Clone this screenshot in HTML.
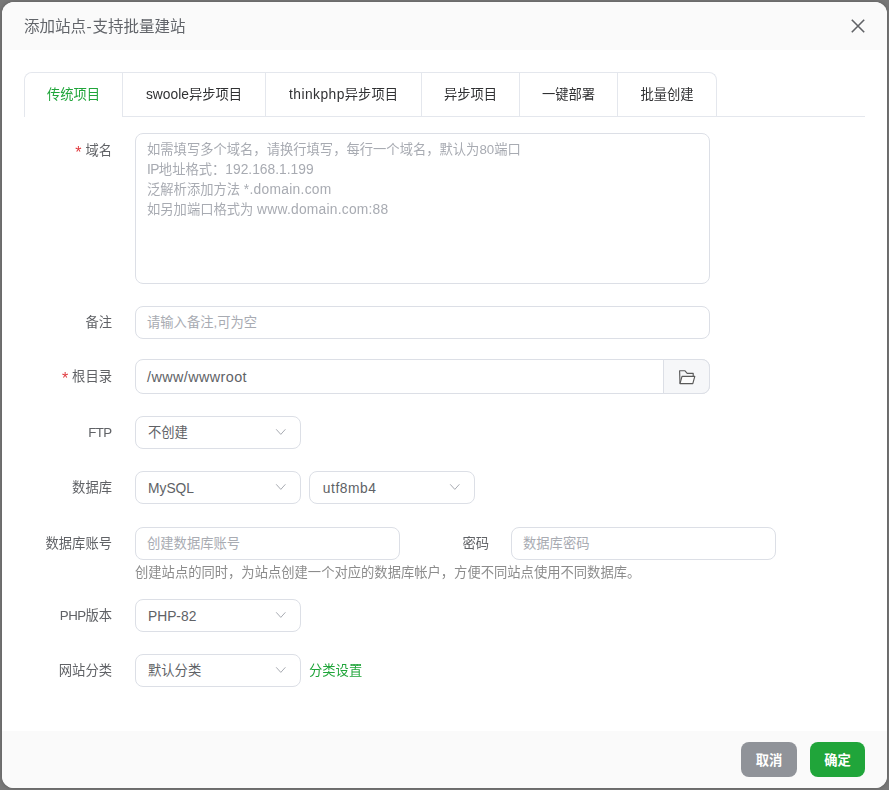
<!DOCTYPE html>
<html lang="zh-CN">
<head>
<meta charset="utf-8">
<title>添加站点-支持批量建站</title>
<style>
*{box-sizing:border-box;margin:0;padding:0}
html,body{width:889px;height:790px;overflow:hidden}
body{background:#787878;text-spacing-trim:space-all;font-family:"Liberation Sans","Noto Sans CJK SC",sans-serif;font-size:13.3px;color:#606266;position:relative}
.dlg{position:absolute;left:2px;top:2px;width:885px;height:786px;border-radius:12px;background:#fff;overflow:hidden;box-shadow:0 0 4px rgba(0,0,0,.25)}
.hd{position:absolute;left:0;top:0;width:100%;height:48px;background:#fafafa}
.hd .t{position:absolute;left:22px;top:0;line-height:49px;font-size:15.5px;color:#62656a;white-space:nowrap}
.hd svg{position:absolute;left:848.8px;top:17px}
.ft{position:absolute;left:0;top:729px;width:100%;height:57px;background:#fafafa}
.btn{position:absolute;top:11px;height:35px;border-radius:8px;color:#fff;font-size:13.3px;font-weight:bold;line-height:37px;text-align:center}
.b1{left:739px;width:56px;background:#909399}
.b2{left:808px;width:55px;background:#20a53a}
.tabs{position:absolute;left:22px;top:70px;height:45px;width:841px;border-bottom:1px solid #e4e7ed}
.nav{position:absolute;left:0;top:0;height:45px;border:1px solid #e4e7ed;border-bottom:none;border-radius:8px 8px 0 0;display:flex}
.tab{height:44px;line-height:44px;text-align:center;font-size:13.3px;color:#303133;border-left:1px solid #e4e7ed;white-space:nowrap}
.tab:first-child{border-left:none}
.tab.on{color:#20a53a;background:#fff;height:45px;position:relative;z-index:2;border-radius:8px 0 0 0}
.lb{position:absolute;left:0;width:110px;text-align:right;height:33px;line-height:34px;font-size:13.3px;color:#606266;white-space:nowrap}
.lb i{font-style:normal;color:#e03a3e;margin-right:4px;font-size:16px;line-height:10px;display:inline-block;vertical-align:-3px}
.ip{position:absolute;height:33px;border:1px solid #dcdfe6;border-radius:8px;background:#fff;line-height:31px;padding-left:11px;font-size:13.3px;color:#606266;white-space:nowrap}
.ph{color:#a8abb2}
.g{will-change:transform}
.sel{padding-left:12px}
.sel svg{position:absolute;left:139px;top:11px}
.la{font-size:13.8px}.lo{position:relative;top:1px}
</style>
</head>
<body>
<div class="dlg">
  <div class="hd">
    <div class="t g">添加站点<span style="margin:0 .6px">-</span>支持批量建站</div>
    <svg width="14" height="14" viewBox="0 0 14 14"><path d="M0.8 0.8L13.2 13.2M13.2 0.8L0.8 13.2" stroke="#606266" stroke-width="1.6" fill="none"/></svg>
  </div>

  <div class="tabs">
    <div class="nav g">
      <div class="tab on" style="width:97px">传统项目</div>
      <div class="tab" style="width:143px"><span class="la">swoole</span>异步项目</div>
      <div class="tab" style="width:156px"><span class="la" style="letter-spacing:.46px">thinkphp</span>异步项目</div>
      <div class="tab" style="width:98px">异步项目</div>
      <div class="tab" style="width:98px">一键部署</div>
      <div class="tab" style="width:99px">批量创建</div>
    </div>
  </div>

  <div class="lb g" style="top:132px"><i>*</i>域名</div>
  <div class="ip ph g" style="left:133px;top:131px;width:575px;height:151px;line-height:20px;padding-top:6px;padding-left:11px">如需填写多个域名，请换行填写，每行一个域名，默认为80端口<br><span class="la" style="letter-spacing:-.6px">IP</span>地址格式：<span class="la">192.168.1.199</span><br>泛解析添加方法 <span class="la" style="letter-spacing:.29px">*.domain.com</span><br>如另加端口格式为 <span class="la" style="letter-spacing:.24px">www.domain.com:88</span></div>

  <div class="lb g" style="top:304px">备注</div>
  <div class="ip ph" style="left:133px;top:304px;width:575px">请输入备注,可为空</div>

  <div class="lb g" style="top:358px"><i>*</i>根目录</div>
  <div class="ip" style="left:133px;top:357px;width:575px;height:35px;line-height:35px;font-size:14.4px;letter-spacing:.4px">/www/wwwroot</div>
  <div style="position:absolute;left:661px;top:357px;width:47px;height:35px;border:1px solid #dcdfe6;border-radius:0 8px 8px 0;background:#f6f7f9">
    <svg style="position:absolute;left:15px;top:10px" width="17" height="15" viewBox="0 0 17 15"><path d="M1 13.6L0.6 0.7h5.2L8.2 3.3h6v3" fill="none" stroke="#5a5a5a" stroke-width="1.15" stroke-linejoin="round"/><path d="M1 13.6L3 6.4h12.8l-2 7.2z" fill="#fcfcfc" stroke="#5a5a5a" stroke-width="1.15" stroke-linejoin="round"/></svg>
  </div>

  <div class="lb g" style="top:414px"><span style="letter-spacing:-.7px;margin-right:.7px">FTP</span></div>
  <div class="ip sel" style="left:133px;top:414px;width:166px">不创建<svg width="12" height="8" viewBox="0 0 12 8"><path d="M1.2 1.3L5.8 6.4L10.4 1.3" fill="none" stroke="#a8abb2" stroke-width="1"/></svg></div>

  <div class="lb g" style="top:469px">数据库</div>
  <div class="ip sel" style="left:133px;top:469px;width:166px"><span class="la lo">MySQL</span><svg width="12" height="8" viewBox="0 0 12 8"><path d="M1.2 1.3L5.8 6.4L10.4 1.3" fill="none" stroke="#a8abb2" stroke-width="1"/></svg></div>
  <div class="ip sel" style="left:307px;top:469px;width:166px"><span class="la lo" style="margin-left:.8px;letter-spacing:.55px">utf8mb4</span><svg width="12" height="8" viewBox="0 0 12 8"><path d="M1.2 1.3L5.8 6.4L10.4 1.3" fill="none" stroke="#a8abb2" stroke-width="1"/></svg></div>

  <div class="lb g" style="top:525px">数据库账号</div>
  <div class="ip ph" style="left:133px;top:525px;width:265px">创建数据库账号</div>
  <div class="lb g" style="top:525px;left:377px">密码</div>
  <div class="ip ph" style="left:509px;top:525px;width:265px">数据库密码</div>
  <div class="g" style="position:absolute;left:133px;top:561px;line-height:20px;font-size:13.3px;color:#8c8c8c;white-space:nowrap">创建站点的同时，为站点创建一个对应的数据库帐户，方便不同站点使用不同数据库。</div>

  <div class="lb g" style="top:597px"><span style="letter-spacing:-.6px">PHP</span>版本</div>
  <div class="ip sel" style="left:133px;top:597px;width:166px"><span class="la lo">PHP-82</span><svg width="12" height="8" viewBox="0 0 12 8"><path d="M1.2 1.3L5.8 6.4L10.4 1.3" fill="none" stroke="#a8abb2" stroke-width="1"/></svg></div>

  <div class="lb g" style="top:652px">网站分类</div>
  <div class="ip sel" style="left:133px;top:652px;width:166px">默认分类<svg width="12" height="8" viewBox="0 0 12 8"><path d="M1.2 1.3L5.8 6.4L10.4 1.3" fill="none" stroke="#a8abb2" stroke-width="1"/></svg></div>
  <div class="g" style="position:absolute;left:307px;top:652px;line-height:34px;font-size:13.3px;color:#20a53a;white-space:nowrap">分类设置</div>

  <div class="ft">
    <div class="btn b1">取消</div>
    <div class="btn b2">确定</div>
  </div>
</div>
</body>
</html>
